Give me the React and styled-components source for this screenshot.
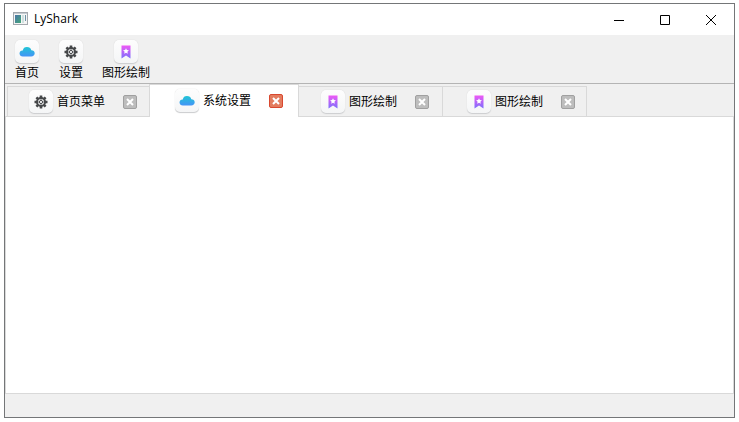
import React, { useState } from 'react';
import styled, { createGlobalStyle } from 'styled-components';

const GlobalStyle = createGlobalStyle`
  * { box-sizing:border-box; }
  body { margin:0; background:#fff; color:#000; font:12px/16px "Liberation Sans", "Noto Sans CJK SC", sans-serif; }
  button { border:none; background:none; padding:0; color:inherit; font:inherit; }
`;

const Page = styled.div`
  min-height:100vh; padding:3px 4px 4px; display:flex;
`;

const Window = styled.main`
  flex:1; min-width:0; display:flex; flex-direction:column; border:1px solid #747678; background:#f0f0f0;
`;

const TitleBar = styled.header`
  height:31px; display:flex; align-items:center; padding-left:8px; background:#fff;
  > svg { margin-bottom:3px; }
`;

const Title = styled.h1`
  flex:1; margin:0 0 2px 6px; font:12px/16px "Open Sans", sans-serif;
`;

const WindowButton = styled.button`
  width:46px; height:31px; display:flex; align-items:center; justify-content:center;
  &:hover { background:#e5e5e5; }
`;

const Toolbar = styled.nav`
  height:49px; display:flex; align-items:flex-start; gap:18px; padding:5px 9px 0; border-bottom:1px solid #b4b4b4;
`;

const ToolButton = styled.button`
  min-width:26px; display:flex; flex-direction:column; align-items:center; gap:1px;
`;

const TabBar = styled.div`
  height:33px; display:flex; align-items:flex-end; padding-left:2px; border-bottom:1px solid #d9d9d9;
`;

const Tab = styled.div`
  height:30px; display:flex; align-items:center; flex:none;
  padding:0 ${p=>p.$last?11:13}px 0 ${p=>p.$first?21:24}px;
  border:1px solid #d9d9d9; border-bottom:none; border-left-width:${p=>p.$first?1:0}px;
  ${p=>p.$active && `
    position:relative; height:33px; margin:0 -2px -1px; padding:0 15px 0 25px; border-left-width:1px; background:#fff;
  `}
`;

const TabLabel = styled.button`
  display:flex; align-items:center; gap:4px; margin-right:18px;
`;

const CloseButton = styled.button`
  width:14px; height:14px; display:flex; align-items:center; justify-content:center; border-radius:2px;
  border:1px solid ${p=>p.$active?'#d9482f':'#a0a0a0'}; background:${p=>p.$active?'#e37c5f':'#bdbdbd'};
`;

const Panel = styled.section`
  flex:1; background:#fff; border:1px solid #d9d9d9; border-top:none;
`;

const StatusBar = styled.footer`
  height:23px;
`;

const Tile = styled.span`
  width:24px; height:24px; display:flex; align-items:center; justify-content:center; border-radius:5px;
  background:linear-gradient(#fdfdfd, #f4f5f6); box-shadow:inset 0 -1px #cfd0d2, 0 0 1px #c8c8c8;
`;

function Cloud(){
  return (
    <svg width="16" height="16" viewBox="0 0 16 16" aria-hidden="true">
      <defs>
        <linearGradient id="cloud" x1="0" y1="0" x2="0" y2="1">
          <stop offset="0" stopColor="#20c5d5" />
          <stop offset="1" stopColor="#4494f7" />
        </linearGradient>
      </defs>
      <path fill="url(#cloud)" d="M4 12.5a3.4 3.4 0 0 1-3.5-3 3.2 3.2 0 0 1 3.3-3A4.2 4.2 0 0 1 8 3.1c2.2 0 3.8 1.2 4.3 3.2 2 0 3.4 1.3 3.4 3 0 1.9-1.4 3.2-3.5 3.2z" />
    </svg>
  );
}

function Gear(){
  return (
    <svg width="16" height="16" viewBox="0 0 16 16" fill="none" stroke="#46484a" aria-hidden="true">
      {[0,45,90,135].map(a => (
        <path key={a} strokeWidth="2.6" transform={`rotate(${a} 8 8)`} d="M8 1.5v2.5M8 12v2.5" />
      ))}
      <circle cx="8" cy="8" r="4" strokeWidth="2" />
      <circle cx="8" cy="8" r="1.6" strokeWidth="1" />
      <path strokeWidth=".7" d="M8 4v2.5M8 9.5V12M4 8h2.5M9.5 8H12" />
    </svg>
  );
}

function Bookmark(){
  return (
    <svg width="16" height="16" viewBox="0 0 16 16" aria-hidden="true">
      <defs>
        <linearGradient id="bookmark" x1="0" y1="0" x2="0" y2="1">
          <stop offset="0" stopColor="#ee58f5" />
          <stop offset="1" stopColor="#7b71fb" />
        </linearGradient>
      </defs>
      <path fill="url(#bookmark)" d="M3.5 1.5h9v13L8 11.5l-4.500 3z" />
      <path fill="#fff" d="m8 4.2.9 1.8 2 .3-1.5 1.4.4 2L8 8.8l-1.8.9.4-2-1.5-1.4 2-.3z" />
    </svg>
  );
}

function AppIcon(){
  return (
    <svg width="15" height="13" viewBox="0 0 15 13" shapeRendering="crispEdges" aria-hidden="true">
      <defs>
        <linearGradient id="screen" x1="0" y1="0" x2="1" y2="1">
          <stop offset="0" stopColor="#4b76a8" />
          <stop offset="1" stopColor="#43a779" />
        </linearGradient>
      </defs>
      <path fill="#f5f5f5" stroke="#a3a8ad" d="M.5.5h14v12H.5z" />
      <path fill="#c5cbd1" d="M1 1h13v1H1z" />
      <path fill="url(#screen)" d="M2 3h6v8H2z" />
      <path fill="#cfe0df" d="M9 3h2v8H9z" />
      <path fill="#6c93a5" d="M12 3h1v6h-1z" />
    </svg>
  );
}

const icons = { cloud: Cloud, gear: Gear, bookmark: Bookmark };

function TileIcon({ name }){
  const Icon = icons[name];
  return <Tile><Icon /></Tile>;
}

const tools = [
  {icon:'cloud', text:'首页'},
  {icon:'gear', text:'设置'},
  {icon:'bookmark', text:'图形绘制'}
];

const startTabs = [
  {id:1, icon:'gear', text:'首页菜单'},
  {id:2, icon:'cloud', text:'系统设置'},
  {id:3, icon:'bookmark', text:'图形绘制'},
  {id:4, icon:'bookmark', text:'图形绘制'}
];

const controls = [
  {label:'Minimize', d:'M0 5.5h10'},
  {label:'Maximize', d:'M.5.5h9v9h-9z'},
  {label:'Close', d:'M0 0l10 10M10 0L0 10'}
];

export default function App(){
  const [tabs, setTabs] = useState(startTabs);
  const [active, setActive] = useState(2);

  const close = id => {
    const rest = tabs.filter(t => t.id !== id);
    setTabs(rest);
    if (id === active && rest.length) setActive(rest[0].id);
  };

  return (
    <Page>
      <GlobalStyle />
      <Window>
        <TitleBar>
          <AppIcon />
          <Title>LyShark</Title>
          {controls.map(c => (
            <WindowButton key={c.label} aria-label={c.label}>
              <svg width="10" height="10" viewBox="0 0 10 10" fill="none" stroke="#000"><path d={c.d} /></svg>
            </WindowButton>
          ))}
        </TitleBar>
        <Toolbar>
          {tools.map(t => (
            <ToolButton key={t.text}>
              <TileIcon name={t.icon} />
              <span>{t.text}</span>
            </ToolButton>
          ))}
        </Toolbar>
        <TabBar role="tablist">
          {tabs.map((t,i) => (
            <Tab key={t.id} role="presentation" $active={t.id===active} $first={i===0} $last={i===tabs.length-1}>
              <TabLabel role="tab" aria-selected={t.id===active} onClick={()=>setActive(t.id)}>
                <TileIcon name={t.icon} />
                <span>{t.text}</span>
              </TabLabel>
              <CloseButton $active={t.id===active} aria-label={`关闭 ${t.text}`} onClick={()=>close(t.id)}>
                <svg width="8" height="8" viewBox="0 0 8 8" stroke="#fff" strokeWidth="2"><path d="M1 1l6 6M7 1L1 7" /></svg>
              </CloseButton>
            </Tab>
          ))}
        </TabBar>
        <Panel role="tabpanel" />
        <StatusBar />
      </Window>
    </Page>
  );
}
